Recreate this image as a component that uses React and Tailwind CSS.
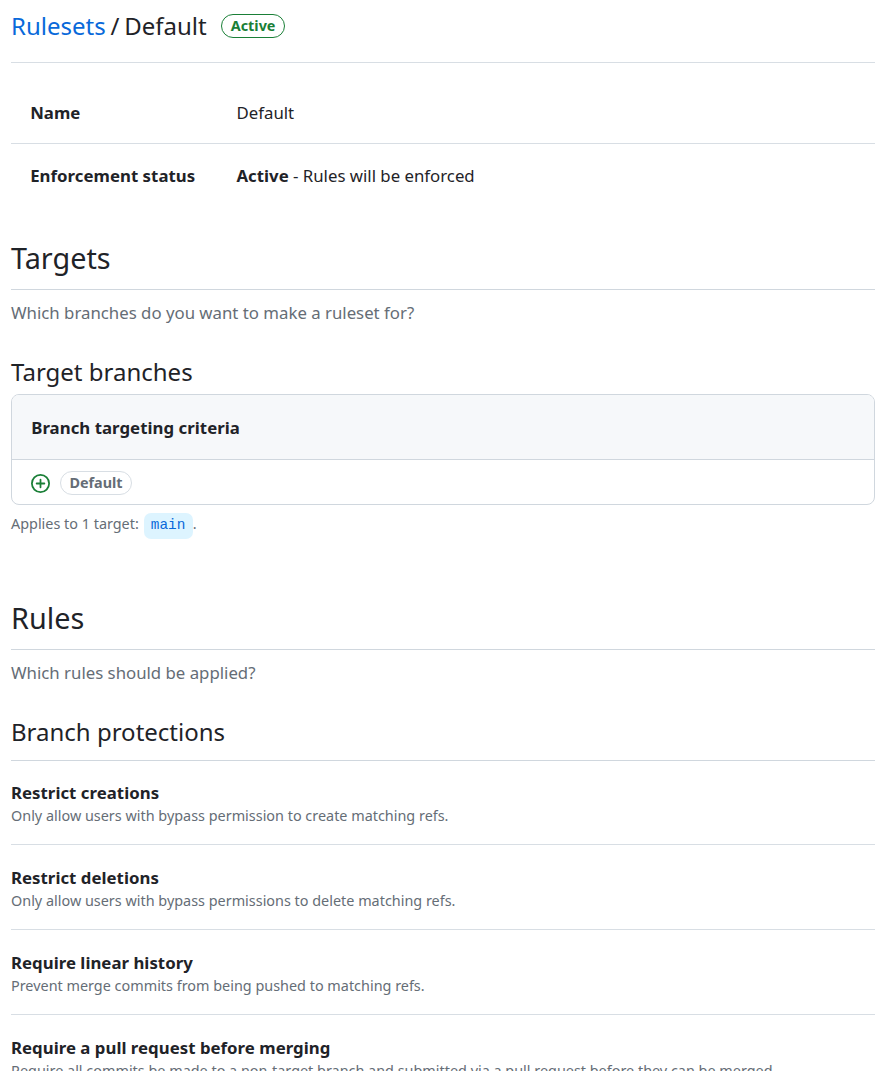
const rules = [
  ["Restrict creations", "Only allow users with bypass permission to create matching refs."],
  ["Restrict deletions", "Only allow users with bypass permissions to delete matching refs."],
  ["Require linear history", "Prevent merge commits from being pushed to matching refs."],
  ["Require a pull request before merging", "Require all commits be made to a non-target branch and submitted via a pull request before they can be merged."],
];

function PlusCircle() {
  return (
    <svg className="size-[19px] shrink-0 fill-[#1a7f37]" viewBox="0 0 16 16" aria-hidden="true">
      <path d="M8 0a8 8 0 1 1 0 16A8 8 0 0 1 8 0ZM1.5 8a6.5 6.5 0 1 0 13 0 6.5 6.5 0 0 0-13 0Zm7.25-3.25v2.5h2.5a.75.75 0 0 1 0 1.5h-2.5v2.5a.75.75 0 0 1-1.5 0v-2.5h-2.5a.75.75 0 0 1 0-1.5h2.5v-2.5a.75.75 0 0 1 1.5 0Z" />
    </svg>
  );
}

export default function App() {
  return (
    <main className="h-[1071px] overflow-hidden bg-white pl-[11px] pr-[21px] font-['Noto_Sans',sans-serif] text-[16.8px] leading-[25px] text-[#1f2328]">
      <header className="flex h-[63px] items-start border-b border-[#d8dee4] pt-[8px]">
        <h1 className="flex gap-[4.8px] text-[24px] leading-9"><a className="text-[#0969da]">Rulesets</a><span>/</span><span>Default</span></h1>
        <span className="mt-[6px] ml-[14.4px] flex h-6 w-16 items-center justify-center rounded-full border border-[#1a7f37] text-[14.4px] font-bold leading-5 text-[#1a7f37]">Active</span>
      </header>
      <dl>
        <div className="flex h-[81px] border-b border-[#d8dee4] pt-[37px] pl-[19.2px]">
          <dt className="w-[206.3px] font-bold tracking-[0.03px]">Name</dt><dd>Default</dd>
        </div>
        <div className="flex h-[92px] pt-[19px] pl-[19.2px]">
          <dt className="w-[206.3px] font-bold tracking-[0.03px]">Enforcement status</dt><dd><b className="font-bold">Active</b> - Rules will be enforced</dd>
        </div>
      </dl>
      <section className="h-[360px]">
        <h2 className="h-[54px] border-b border-[#d0d7de] text-[28.8px] leading-[44px]">Targets</h2>
        <p className="mt-[10px] text-[#656d76]">Which branches do you want to make a ruleset for?</p>
        <h3 className="mt-[29px] text-[24px] leading-[36px]">Target branches</h3>
        <div className="mt-[4px] h-[111px] overflow-hidden rounded-[8px] border border-[#d0d7de]">
          <div className="h-[65px] border-b border-[#d0d7de] bg-[#f6f8fa] pt-[20px] pl-[19.2px] font-bold tracking-[0.04px]">Branch targeting criteria</div>
          <div className="flex h-11 items-center gap-[10px] pt-[2px] pl-[19px]">
            <PlusCircle />
            <span className="flex h-6 w-[72px] items-center justify-center rounded-full border border-[#d8dee4] text-[14.4px] font-bold leading-5 text-[#656d76]">Default</span>
          </div>
        </div>
        <p className="mt-[8px] flex h-[26px] items-center text-[14.4px] leading-[22px] text-[#656d76]"><span className="pb-[4px]">Applies to 1 target:</span><code className="ml-[5px] flex h-[26px] w-[49px] items-center rounded-[7px] bg-[#ddf4ff] px-[7px] pb-[2px] font-['Liberation_Mono',monospace] text-[14.4px] text-[#0969da]">main</code><span className="pb-[4px]">.</span></p>
      </section>
      <section>
        <h2 className="h-[54px] border-b border-[#d0d7de] text-[28.8px] leading-[44px]">Rules</h2>
        <p className="mt-[10px] text-[#656d76]">Which rules should be applied?</p>
        <h3 className="mt-[29px] h-[47px] border-b border-[#d0d7de] text-[24px] leading-[36px]">Branch protections</h3>
        <ul>
          {rules.map(([title, text]) => (
            <li key={title} className="h-[85px] border-b border-[#d8dee4] pt-[20px] first:h-[84px] first:pt-[19px]">
              <h4 className="font-bold tracking-[0.03px]">{title}</h4>
              <p className="text-[14.4px] leading-[22px] tracking-[0.005px] text-[#656d76]">{text}</p>
            </li>
          ))}
        </ul>
      </section>
    </main>
  );
}
